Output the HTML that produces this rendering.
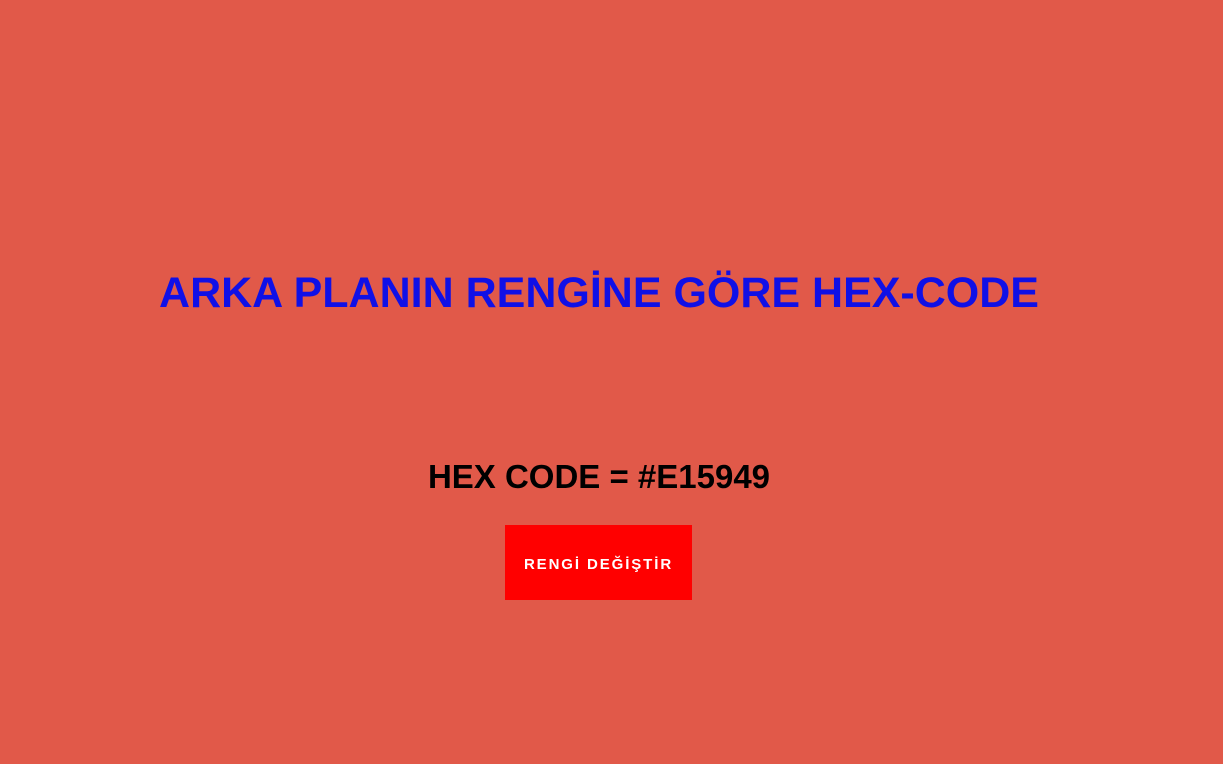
<!DOCTYPE html>
<html><head><meta charset="utf-8"><style>
html,body{margin:0;padding:0;}
body{width:1223px;height:764px;background:#E15949;font-family:"Liberation Sans",sans-serif;position:relative;overflow:hidden;}
h1{position:absolute;left:0;width:1198px;top:266px;margin:0;font-size:43px;line-height:54px;color:#1010e6;font-weight:bold;text-align:center;}
.hex{position:absolute;left:0;width:1198px;top:457px;margin:0;font-size:33px;line-height:40px;font-weight:bold;color:#000;text-align:center;}
.btn{position:absolute;left:505px;top:525px;width:187px;height:75px;background:#ff0000;color:#fff;font-weight:900;font-size:15px;display:flex;align-items:center;justify-content:center;letter-spacing:1.9px;padding-top:3px;box-sizing:border-box;}
</style></head><body>
<h1>ARKA PLANIN RENGİNE GÖRE HEX-CODE</h1>
<div class="hex">HEX CODE = #E15949</div>
<div class="btn">RENGİ DEĞİŞTİR</div>
</body></html>
